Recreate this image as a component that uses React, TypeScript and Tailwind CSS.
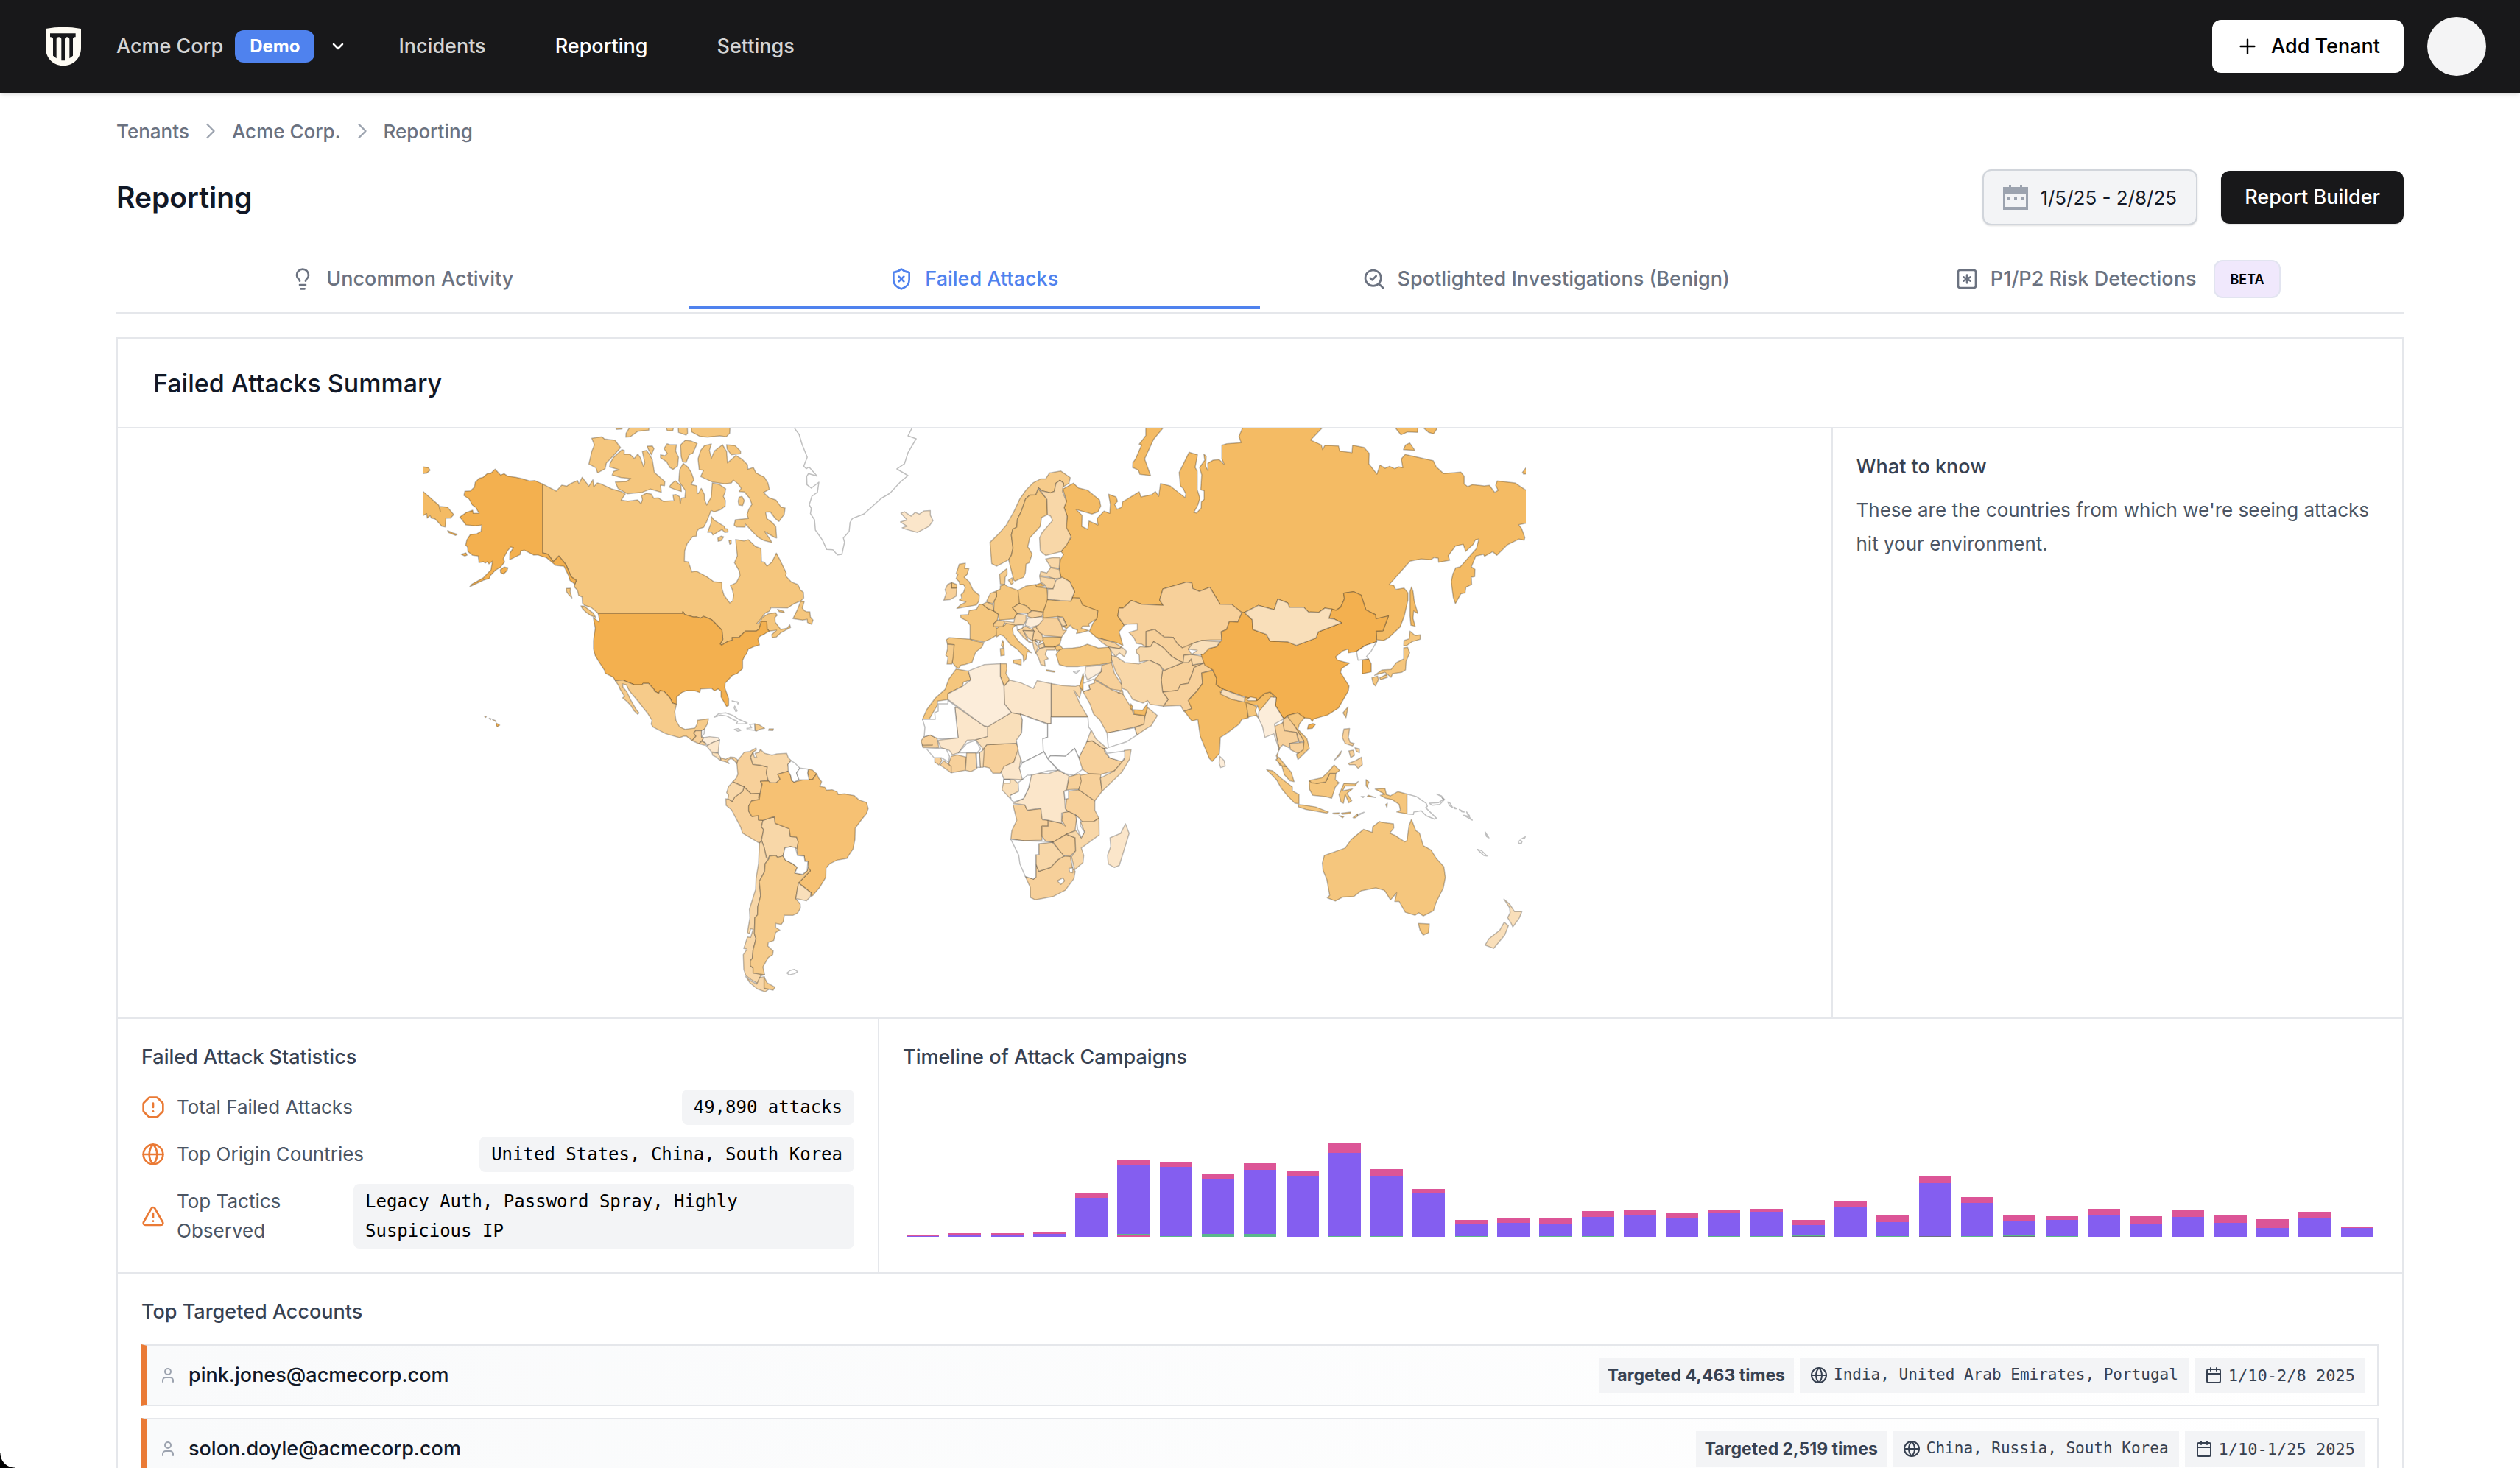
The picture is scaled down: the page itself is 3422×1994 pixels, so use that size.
import React from 'react';
import {
  Calendar,
  ChevronDown,
  ChevronRight,
  Globe,
  Lightbulb,
  OctagonAlert,
  Plus,
  SearchCheck,
  ShieldX,
  SquareAsterisk,
  TriangleAlert,
  User,
} from 'lucide-react';

const SANS = "font-['Inter','Liberation_Sans',sans-serif]";
const MONO = "font-['DejaVu_Sans_Mono','Liberation_Mono',monospace]";

// Every contour of a region is drawn on its own so that shared borders read darker.
type Region = { fill: string; d: string };
type Tile = { transform: string; regions: Region[] };

const MAX = '#f3b04f';
const HIGH = '#f4bb64';
const BRAZIL = '#f6c173';
const MID = '#f5c67d';
const MEXICO = '#f6cb8a';
const SOFT = '#f7d09a';
const PALE = '#f8d7a8';
const PALER = '#f9dfba';
const FAINT = '#fbe6ca';
const LOWEST = '#fcedda';
const NONE = '#ffffff';

const northAmerica: Tile = {
  transform: 'translate(560 570) scale(.3954 .3333)',
  regions: [
    {
      fill: NONE,
      d: 'M1313 36L1328 60L1338 100L1356 153L1344 190L1353 200L1362 193L1390 230L1360 220L1354 232L1355 265L1370 279L1396 255L1391 296L1372 312L1363 347L1370 362L1367 383L1381 408L1384 450L1408 490L1423 529L1444 530L1460 551L1475 549L1484 500L1480 482L1500 455L1503 420L1511 403L1550 385L1610 321L1640 300L1675 255L1702 228L1664 201L1690 180L1702 135L1730 78L1702 66L1715 36L1715 20L1313 20Z M1036 1213L1052 1198L1076 1195L1100 1205L1122 1222L1150 1236L1142 1240L1113 1239L1117 1230L1100 1221L1080 1208L1058 1204Z M1106 1262L1118 1259L1128 1266L1118 1270Z M1149 1258L1165 1256L1158 1242L1176 1240L1177 1266L1150 1263Z M1098 1146L1108 1149L1120 1153L1118 1159L1116 1150L1100 1149Z M1107 1167L1115 1187L1111 1190L1105 1175Z',
    },
    {
      fill: MID,
      d: 'M447 262L494 291L513 267L530 271L543 261L567 248L572 262L583 235L606 271L620 245L623 273L635 258L648 262L684 282L717 293L731 303L717 328L740 332L774 327L785 343L790 326L787 310L803 300L820 303L829 320L845 319L862 333L898 330L895 307L905 305L918 314L920 343L923 320L936 317L938 290L915 250L918 204L930 178L945 192L957 213L967 245L957 264L977 270L978 302L983 300L992 280L1003 305L1003 325L1011 348L1026 316L1030 258L1054 264L1076 282L1074 295L1068 313L1075 330L1074 352L1058 367L1037 376L1026 370L1011 415L1000 439L985 444L976 457L975 475L963 476L944 505L935 535L934 577L948 580L960 620L975 617L1011 640L1036 661L1063 664L1063 688L1070 715L1090 747L1100 738L1103 715L1098 690L1092 676L1112 665L1125 635L1123 618L1106 583L1116 555L1110 488L1139 494L1154 489L1178 517L1197 525L1199 578L1209 581L1218 597L1235 580L1250 544L1266 580L1284 625L1282 637L1302 662L1324 672L1332 693L1343 704L1344 727L1335 738L1311 750L1289 767L1232 766L1225 781L1211 789L1196 813L1183 830L1190 830L1203 805L1222 791L1247 787L1253 797L1245 806L1246 825L1265 855L1287 850L1296 836L1299 847L1266 868L1250 886L1236 888L1234 876L1251 858L1225 862L1218 853L1217 823L1199 822L1190 855L1180 862L1144 862L1122 887L1098 888L1099 899L1085 903L1062 919L1057 914L1066 895L1063 858L1040 830L1027 815L1000 802L990 809L975 804L966 805L935 794L929 782L928 790L638 790L614 765L592 757L584 748L583 723L571 716L567 695L556 682L558 670L563 655L545 640L527 590L503 556L484 579L466 549L447 543Z M579 759L590 760L621 788L630 806L612 798L597 786L584 770Z M528 688L543 687L542 701L548 727L538 715L530 702Z M1346 740L1333 742L1322 775L1307 811L1340 817L1356 814L1357 827L1371 834L1376 817L1367 805L1365 783L1352 782L1346 778L1339 768Z M1254 773L1275 781L1278 787L1260 783Z M616 76L651 70L660 79L696 84L715 114L692 145L666 177L662 200L636 217L630 196L606 181L616 130L625 103Z M720 122L728 126L727 141L747 140L762 158L774 140L783 155L794 192L798 176L790 130L804 125L815 143L824 163L831 215L867 252L866 269L852 267L855 296L817 283L790 296L738 302L706 280L697 254L734 252L750 240L717 236L686 226L691 211L710 204L677 193L679 178L690 155Z M806 108L824 107L830 118L821 143L812 125Z M875 98L884 102L907 102L904 128L914 153L911 189L895 203L884 195L873 172L852 155L852 143L868 147L875 137L864 118Z M937 84L955 86L978 97L963 137L951 143L940 175L928 172L923 150L921 103Z M903 249L922 268L924 293L905 286L882 275L890 261Z M1027 99L1020 125L1027 157L1037 128L1065 102L1079 130L1082 176L1095 163L1111 146L1131 160L1151 184L1152 202L1171 195L1180 217L1209 235L1221 258L1226 284L1206 297L1225 318L1249 328L1266 356L1280 360L1277 386L1259 415L1246 403L1229 376L1213 377L1217 403L1235 418L1248 435L1251 482L1244 480L1210 456L1227 485L1235 501L1208 493L1188 480L1170 459L1144 426L1142 438L1113 437L1105 430L1109 408L1154 403L1149 388L1155 366L1166 345L1158 320L1140 295L1122 293L1129 280L1118 261L1102 246L1096 258L1073 262L1030 254L990 232L1000 206L985 204L981 160L990 125L1003 106Z M1079 102L1108 106L1127 128L1127 139L1095 143L1081 120Z M957 20L1091 20L1090 55L1078 70L1056 66L1013 71L987 68L959 50Z M912 20L944 20L945 55L940 63L914 52Z M868 20L900 20L894 46L875 44Z M733 71L734 55L752 20L813 20L812 43L775 47L748 70Z M697 20L722 20L720 38L700 40Z M1026 394L1037 410L1071 435L1073 443L1083 446L1084 458L1073 460L1063 448L1032 470L1027 458L1014 459L1026 421Z M1049 483L1060 475L1069 478L1060 493L1050 496Z M1087 492L1095 492L1095 505L1090 508Z M1122 316L1132 313L1140 330L1134 350L1121 348L1119 332Z',
    },
    {
      fill: MAX,
      d: 'M447 262L447 543L466 549L484 579L503 556L527 590L545 640L563 655L558 670L541 655L536 635L521 598L492 594L461 563L430 551L417 552L385 532L372 535L370 550L334 571L335 543L347 522L338 519L327 534L312 567L317 580L302 602L286 613L267 637L264 647L243 655L197 681L205 670L243 645L270 612L275 577L263 588L258 579L250 585L244 579L229 583L226 556L207 553L191 538L189 518L183 512L187 490L199 468L220 466L236 455L238 430L216 433L184 429L163 397L184 379L207 369L209 382L229 382L218 358L206 348L195 324L177 309L180 292L200 290L213 275L216 255L229 239L243 235L257 220L268 220L284 202L303 226L315 220L327 230L354 235L375 240L402 250L420 248Z M302 612L315 601L328 604L325 616L313 629L303 623Z M168 549L184 543L188 552L180 556Z M121 452L138 461L154 467L148 472L124 460Z M289 1237L300 1245L291 1252L288 1244Z M275 1222L285 1226L287 1231Z M264 1217L270 1219L268 1223Z M248 1209L254 1211L250 1214Z M638 790L928 790L929 782L935 794L966 805L975 804L990 809L1000 802L1027 815L1040 830L1063 858L1066 895L1057 914L1062 919L1085 903L1099 899L1098 888L1122 887L1144 862L1180 862L1190 855L1199 822L1217 823L1218 853L1225 862L1210 873L1192 884L1187 895L1192 918L1173 925L1154 935L1147 955L1140 965L1134 982L1134 1015L1116 1034L1098 1043L1074 1074L1073 1093L1086 1136L1086 1165L1079 1169L1060 1130L1060 1107L1050 1097L1038 1105L1027 1095L990 1097L987 1112L970 1105L943 1104L925 1112L907 1132L907 1160L893 1155L885 1135L864 1107L850 1104L846 1116L832 1107L829 1098L811 1075L792 1075L789 1081L761 1080L722 1061L697 1064L690 1050L662 1033L660 1022L640 985L628 962L622 935L622 900L628 850L621 806L641 825L642 812Z',
    },
    {
      fill: HIGH,
      d: 'M20 280L38 294L91 349L96 375L93 353L121 357L142 387L131 401L115 402L113 437L101 434L88 417L77 404L65 401L61 391L51 401L49 383L38 390L20 390Z M20 193L38 193L55 196L61 206L49 218L38 220L20 220Z',
    },
    {
      fill: MEXICO,
      d: 'M697 1064L722 1061L761 1080L789 1081L792 1075L811 1075L829 1098L832 1107L846 1116L850 1104L864 1107L885 1135L893 1155L907 1160L901 1190L905 1225L918 1252L936 1262L970 1257L978 1240L979 1225L1017 1219L1013 1240L1003 1261L993 1268L973 1268L966 1277L974 1290L961 1308L941 1290L931 1290L918 1296L870 1280L827 1253L820 1241L823 1225L808 1197L790 1170L780 1155L770 1140L745 1105L735 1081L722 1077L723 1090L737 1110L750 1143L768 1180L778 1195L774 1201L760 1185L752 1168L738 1150L722 1134L729 1128L714 1100L708 1083Z M1176 1240L1192 1244L1210 1258L1194 1262L1180 1270L1177 1266Z M1225 1260L1240 1260L1238 1267L1223 1266Z',
    },
    {
      fill: SOFT,
      d: 'M973 1268L993 1268L993 1293L1001 1296L995 1308L984 1321L961 1308L974 1290L966 1277Z M984 1321L995 1310L1007 1318L1007 1328Z',
    },
    {
      fill: LOWEST,
      d: 'M1001 1296L1020 1292L1050 1296L1055 1305L1031 1316L1014 1330L1007 1318L995 1308Z',
    },
    { fill: FAINT, d: 'M1055 1305L1050 1358L1027 1354L1010 1330L1031 1316Z' },
    { fill: NONE, d: 'M993 1268L1003 1261L1002 1280L993 1293Z' },
  ],
};

const southAmerica: Tile = {
  transform: 'translate(960 960) scale(.3333)',
  regions: [
    { fill: PALER, d: 'M20 186L45 189L56 208L55 220L38 205L24 198Z' },
    {
      fill: SOFT,
      d: 'M56 208L76 214L95 205L112 206L126 218L122 232L108 216L98 210L83 220L90 232L76 224L58 220Z M126 218L152 185L175 182L200 168L201 176L188 185L178 205L187 235L216 238L246 245L242 270L250 302L218 304L225 315L217 352L215 378L210 370L213 353L180 355L151 327L105 306L118 292L126 275L122 232Z M151 327L180 355L213 353L210 370L213 378L182 384L170 405L170 425L183 447L210 443L210 461L228 463L222 490L231 500L222 545L214 556L145 515L137 490L100 420L78 402L77 375L90 378L103 385L113 368L145 345Z',
    },
    {
      fill: PALE,
      d: 'M188 185L193 205L203 207L196 190L213 185L217 173L235 190L265 197L285 192L325 190L331 207L343 220L330 235L335 262L288 275L298 295L283 310L268 313L258 310L250 302L242 270L246 245L216 238L187 235L178 205Z M105 306L151 327L145 345L113 368L103 385L85 375L88 360L80 350L88 325Z M228 463L275 447L278 475L335 497L340 529L365 531L372 550L367 578L340 570L318 575L310 608L288 614L280 606L255 608L250 617L242 615L232 570L222 545L231 500L222 490Z M214 556L222 545L232 570L242 615L252 620L237 640L235 672L213 712L219 770L207 815L206 848L195 860L193 925L200 945L188 990L185 1025L177 1035L177 1055L188 1065L188 1085L235 1092L218 1097L207 1128L180 1112L158 1095L150 1070L148 1010L163 988L150 985L165 938L178 940L188 907L178 905L173 925L165 920L175 860L173 825L198 745L200 700L210 640Z M158 1100L180 1118L203 1130L215 1103L233 1100L233 1147L253 1150L237 1162L205 1150L175 1125Z',
    },
    {
      fill: BRAZIL,
      d: 'M413 254L430 258L447 273L430 297L416 297L410 270Z M447 273L455 290L467 305L460 325L480 328L487 340L510 338L530 347L535 358L560 355L600 362L620 380L650 390L657 415L650 435L630 460L604 495L603 540L595 580L580 602L570 618L530 625L500 640L485 658L484 695L460 735L430 770L424 772L424 758L373 718L421 668L413 655L411 631L399 630L396 608L369 606L367 578L372 550L365 531L340 529L335 497L278 475L275 447L228 463L210 461L210 443L183 447L170 425L170 405L182 384L213 378L217 352L225 315L218 304L250 302L258 310L283 310L298 295L288 275L335 262L341 280L345 300L355 307L390 298L416 297L430 297Z',
    },
    {
      fill: MEXICO,
      d: 'M252 620L255 608L280 606L288 614L310 608L320 625L350 640L368 655L358 678L390 683L408 668L413 655L421 668L373 718L368 745L362 782L380 805L381 820L370 840L350 850L315 850L311 875L303 887L280 883L280 900L297 910L280 920L272 953L250 960L248 975L270 995L268 1010L250 1022L228 1060L235 1092L188 1085L188 1065L177 1055L177 1035L185 1025L188 990L200 945L193 925L195 860L206 848L207 815L219 770L213 712L235 672L237 640Z M233 1100L245 1125L277 1143L270 1155L233 1147Z',
    },
    { fill: PALER, d: 'M373 718L424 758L421 775L405 791L370 783L362 782L368 745Z' },
    {
      fill: NONE,
      d: 'M343 220L359 230L378 250L365 270L375 297L355 307L345 300L341 280L331 262L330 235Z M378 250L413 254L410 270L416 297L390 298L375 297L365 270Z M310 608L318 575L340 570L360 574L369 606L396 608L399 630L411 631L408 668L390 683L358 678L368 655L350 640L320 625Z M326 1085L338 1075L356 1070L370 1080L355 1088L335 1093Z',
    },
  ],
};

const europeAfrica: Tile = {
  transform: 'translate(1230 620) scale(.3333 .3954)',
  regions: [
    {
      fill: FAINT,
      d: 'M-20 195L-5 190L22 205L38 192L55 198L75 187L100 186L100 202L111 220L95 240L48 261L0 250L-15 245L5 240L-22 225L5 218Z',
    },
    {
      fill: MEXICO,
      d: 'M419 355L370 377L350 368L343 295L385 260L410 235L440 190L465 145L490 115L520 90L550 77L570 77L585 57L632 50L670 73L665 92L640 105L643 92L628 82L612 92L605 120L590 125L555 118L540 108L530 132L505 133L488 146L470 190L455 215L452 243L436 250L430 270L437 315L430 340Z M385 438L382 405L412 385L413 405L405 415L403 440Z M418 425L433 417L438 435L430 440Z',
    },
    {
      fill: MID,
      d: 'M419 355L430 340L437 315L430 270L436 250L452 243L455 215L470 190L488 146L505 133L530 132L540 112L575 147L577 200L553 210L548 240L505 280L497 310L515 335L503 365L490 370L487 400L480 415L445 428L440 425L425 375Z M218 370L243 367L240 385L257 385L250 405L238 415L258 430L275 460L300 477L298 497L288 510L208 522L222 510L245 500L218 493L228 487L225 475L235 467L242 450L235 440L220 440L217 430L205 420L212 405L205 403Z M187 433L208 440L208 453L186 453Z M300 508L315 508L335 523L358 530L378 542L373 562L358 575L370 590L368 615L345 627L318 637L262 628L262 580L250 565L225 555L223 545L255 543L258 530L288 525Z M395 632L400 642L397 657L389 649Z M385 660L400 658L402 683L387 685Z M165 630L178 622L262 628L275 633L318 640L310 655L285 672L277 690L270 707L240 715L225 717L215 728L205 724L190 708L185 680L197 647L170 645Z M385 445L403 440L415 447L457 460L465 490L463 505L435 520L455 540L440 558L380 562L378 542L358 530L360 495L370 480L368 463L385 455Z M457 460L490 445L530 440L535 448L575 453L580 490L560 535L510 530L490 513L463 505Z M368 592L380 585L403 580L410 572L440 573L447 580L435 590L438 610L460 635L480 650L512 675L495 670L490 695L480 705L478 685L455 663L425 645L400 618L385 612L370 620Z M437 700L470 697L470 717L440 710Z M560 620L635 620L628 645L605 655L568 655L558 635Z M612 680L630 660L680 658L710 655L740 645L785 658L828 655L838 675L838 708L790 715L740 718L700 722L655 722L625 715Z M605 655L628 648L640 660L615 668Z M205 730L255 737L265 768L235 775L230 790L172 815L172 835L130 840L128 855L95 903L68 903L85 870L120 830L160 800L175 765Z M573 733L608 738L605 741L575 737Z M577 492L630 495L672 497L680 485L708 487L720 510L782 530L778 558L745 575L748 583L720 583L715 590L745 598L715 605L695 608L700 597L680 590L670 580L655 592L640 583L655 580L640 552L620 550L560 555L560 535Z',
    },
    {
      fill: MEXICO,
      d: 'M170 645L197 647L193 690L188 713L168 713L172 690L163 683L170 662Z M330 495L345 470L368 463L370 480L355 505L335 502Z M313 508L330 500L355 510L358 530L335 523Z M435 520L463 505L490 513L512 530L497 540L475 538L455 540Z M358 575L375 562L400 565L402 572L395 585L358 585Z M385 712L410 712L412 730L408 745L423 768L400 790L385 755Z',
    },
    {
      fill: SOFT,
      d: 'M187 433L186 453L208 453L205 480L180 492L155 494L165 470L160 458L170 440Z M497 540L515 530L560 535L555 550L515 555L497 550Z M515 590L530 585L555 612L560 630L545 640L515 632L522 600Z M530 585L545 570L560 555L618 555L635 580L640 597L655 597L635 620L565 615L545 605Z M455 597L487 583L510 592L522 600L478 598L500 635L515 640L505 640L480 622Z M780 623L850 640L880 655L870 660L828 655L800 640Z M800 717L838 708L850 745L880 785L880 805L840 800L770 765L795 740Z M722 808L750 800L745 780L770 768L840 802L885 817L920 865L928 885L975 890L970 922L880 940L820 950L790 905L765 885L750 850Z M705 1035L735 980L760 977L808 1003L810 1015L830 1035L885 1048L850 1080L795 1092L745 1090L710 1068Z M315 1005L330 990L450 985L462 1005L440 1050L405 1065L385 1088L355 1088L340 1070L313 1065Z M185 1030L210 1025L247 1033L243 1078L185 1087L175 1055Z M140 1060L155 1045L185 1065L185 1087Z M118 1035L140 1030L147 1045L135 1060L118 1050Z M437 1197L485 1197L495 1215L552 1210L557 1248L580 1250L580 1270L555 1270L555 1318L480 1320L428 1315L432 1285L452 1250Z M660 1150L705 1145L770 1183L770 1215L787 1243L765 1255L720 1255L690 1230L660 1220L650 1210Z M555 1270L580 1270L580 1250L635 1260L650 1270L635 1250L640 1222L665 1220L697 1235L690 1285L655 1298L600 1325L570 1322L555 1305Z M487 1443L520 1452L530 1445L530 1400L542 1425L590 1412L620 1385L645 1373L670 1373L680 1415L690 1425L685 1450L650 1490L600 1512L527 1523L508 1515L507 1480Z M665 1100L708 1090L718 1115L705 1143L655 1145Z M710 1095L745 1090L795 1092L793 1110L800 1150L770 1183L705 1145L715 1115Z M600 1325L655 1298L690 1310L692 1355L670 1373L640 1370Z M62 977L75 963L100 957L127 968L135 1000L70 1000Z M68 988L108 988L108 992L68 993Z',
    },
    {
      fill: PALE,
      d: 'M540 108L555 118L590 125L605 120L612 92L628 82L643 92L638 120L655 155L645 175L657 205L655 245L673 275L655 305L632 327L570 340L548 325L545 280L555 262L598 220L590 205L577 200L575 147Z M570 352L600 347L628 348L625 385L590 380Z M545 410L550 395L575 400L590 382L625 388L632 418L605 420L580 413Z M545 412L605 420L612 432L600 455L575 453L565 440L550 433Z M400 565L440 570L445 550L455 540L490 545L490 565L480 578L450 580L402 572Z M478 598L522 600L515 632L500 625Z M515 632L530 630L527 640L540 655L530 675L522 660Z M618 550L640 555L655 580L638 583L630 570Z M540 648L562 640L565 655L545 660Z M530 675L545 660L568 655L610 655L605 665L575 665L568 680L580 695L565 700L568 720L550 715L540 690Z M592 780L640 787L690 790L712 785L715 805L708 830L685 803L710 850L742 895L592 895Z M985 862L1025 890L1000 925L980 935L942 957L932 932L970 920L975 890Z M890 1010L918 1007L912 1040L880 1085L800 1150L793 1105L850 1080L890 1040Z M712 1255L765 1255L787 1243L788 1300L715 1345L725 1370L722 1395L688 1420L675 1375L692 1355L690 1310L655 1298L693 1285L715 1310L728 1290Z M542 1328L597 1325L645 1373L620 1385L590 1412L542 1425L530 1400L530 1368L542 1368Z M248 1018L285 1018L290 1072L265 1083L243 1078Z M865 812L883 804L886 816Z',
    },
    {
      fill: PALER,
      d: 'M612 425L637 415L668 430L688 465L672 497L630 495L577 490L578 455L600 455Z M828 655L870 660L880 655L900 670L890 688L870 675L855 688L840 672Z M430 880L467 885L475 905L472 950L450 985L330 990L315 1005L285 973L333 962L333 928Z M735 980L745 950L757 942L775 970L820 1003L805 1003L760 977Z M400 1110L440 1110L460 1125L458 1155L430 1162L425 1175L392 1145Z M300 1018L320 1005L315 1068L303 1068Z',
    },
    {
      fill: FAINT,
      d: 'M423 768L470 778L520 797L535 770L592 780L592 918L578 918L467 885L430 880L402 850L400 790Z M210 862L318 925L333 928L333 962L285 973L250 975L215 1018L190 1025L178 1010L143 1000L130 975L213 967L200 862Z M388 1085L400 1065L440 1050L460 1000L470 1030L463 1070L480 1110L400 1108Z M512 1085L580 1090L620 1078L665 1097L655 1145L645 1150L650 1210L660 1220L635 1225L635 1260L555 1245L550 1208L495 1215L485 1197L437 1192L480 1175L500 1140Z M895 1262L910 1295L870 1405L850 1412L825 1400L822 1370L835 1340L832 1310L875 1295Z',
    },
    {
      fill: LOWEST,
      d: 'M487 575L497 555L515 555L555 550L560 560L540 580L510 587L487 580Z M255 737L320 715L385 712L385 755L400 790L402 850L430 880L335 928L318 925L172 835L172 815L230 790L265 768Z M733 722L800 717L795 740L740 768L730 745Z',
    },
    {
      fill: HIGH,
      d: 'M725 755L720 805L708 790L722 745Z M928 870L965 872L985 848L982 870L975 890L930 885Z M917 850L923 858L921 872L914 864Z M528 442L550 435L565 445L535 448Z',
    },
    {
      fill: NONE,
      d: 'M452 580L480 578L475 590L455 597Z M530 630L548 632L540 645Z M683 740L708 735L695 745Z M722 780L765 765L770 778L745 785L750 800L722 808Z M820 950L880 940L932 932L942 957L900 980L825 1000Z M172 838L210 862L200 862L213 967L143 970L127 968L100 957L75 963L78 930L68 903L120 903L118 880L132 875L132 850L172 850Z M467 885L578 920L578 965L560 970L563 1015L475 1052L462 1025L450 975L472 950L475 905Z M592 895L742 895L745 930L755 940L735 985L705 1035L688 1003L650 1030L590 1028L578 1038L560 1010L558 970L578 965L578 918L592 918Z M578 1038L590 1028L650 1030L688 1003L705 1035L720 1075L685 1095L650 1090L620 1075Z M463 1070L475 1052L563 1015L578 1038L620 1078L580 1080L512 1095L475 1110Z M808 1003L820 1020L892 1012L892 1035L880 1048L830 1035Z M645 1150L663 1148L663 1175L648 1177Z M475 1110L495 1095L512 1095L500 1140L480 1175L440 1187L430 1180L425 1165L460 1150L458 1120Z M398 1110L425 1110L425 1122L400 1122Z M288 1020L300 1018L303 1068L290 1068Z M215 1018L250 985L285 975L305 1005L290 1018L250 1018Z M85 1005L130 1003L165 1005L178 1030L175 1050L145 1035L115 1035Z M693 1233L710 1245L712 1270L728 1290L715 1310L700 1280Z M428 1315L480 1320L560 1322L600 1325L542 1330L542 1368L530 1368L530 1445L520 1452L487 1443L465 1400L460 1370Z M617 1458L640 1448L647 1458L632 1470Z M665 1415L680 1413L680 1430L668 1428Z',
    },
  ],
};

const asia: Tile = {
  transform: 'translate(1440 570) scale(.4082 .3333)',
  regions: [
    {
      fill: HIGH,
      d: 'M8 283L43 259L60 278L90 287L130 327L134 352L125 376L105 385L52 366L72 390L71 435L91 447L95 413L125 429L122 403L145 373L164 382L166 345L160 304L185 315L190 333L180 345L188 365L204 357L207 335L262 294L268 315L304 305L316 293L327 312L333 260L365 270L415 318L417 303L408 280L399 270L395 215L428 133L456 143L448 195L455 210L455 285L464 320L457 348L444 378L453 380L468 360L469 335L478 325L478 290L467 286L470 225L463 195L480 165L477 140L485 150L483 190L491 208L490 178L508 165L528 163L545 183L537 160L537 104L553 98L601 94L594 68L605 36L605 20L885 20L869 36L832 83L868 103L872 122L880 104L925 107L929 128L970 134L972 104L1010 113L1027 137L1026 180L1053 222L1063 185L1080 198L1095 190L1112 200L1125 192L1139 196L1134 160L1147 142L1240 167L1250 192L1275 220L1332 214L1343 230L1343 262L1355 273L1370 265L1410 270L1427 268L1445 297L1456 288L1448 268L1453 250L1512 258L1548 287L1570 300L1570 420L1548 422L1524 428L1534 443L1545 480L1543 491L1525 487L1487 510L1452 553L1438 538L1411 557L1407 549L1382 556L1367 600L1379 610L1378 640L1367 642L1368 672L1349 683L1346 706L1332 710L1314 750L1307 725L1300 660L1306 627L1315 604L1330 600L1384 525L1392 487L1381 489L1372 510L1348 537L1340 508L1314 515L1290 555L1295 573L1258 581L1257 565L1243 562L1231 571L1200 568L1163 577L1094 672L1109 676L1115 692L1143 686L1156 706L1156 735L1144 800L1130 845L1091 890L1075 900L1052 897L1050 862L1073 860L1091 800L1050 812L1048 795L1016 775L1000 715L975 701L942 707L945 730L932 765L917 777L880 768L860 785L825 784L810 765L762 765L756 747L723 731L711 775L658 757L612 786L604 787L570 753L531 752L497 683L462 700L440 688L437 665L420 662L341 690L330 735L342 757L270 752L236 737L208 768L195 768L191 800L212 837L205 850L195 865L208 920L185 908L120 888L96 863L108 830L122 808L124 780L73 757L62 727L38 728L47 701L31 660L2 642L-4 607L0 570L10 550L2 537L36 480L18 440L23 395L12 358L20 330Z M284 20L350 20L340 36L310 80L280 160L300 228L264 223L259 205L240 195L241 175L250 160L270 103L262 100L284 65Z M1105 20L1190 20L1188 52L1155 50L1133 62Z M1195 20L1251 20L1251 40L1241 58L1225 52Z M1141 122L1148 103L1162 95L1179 125Z M1570 180L1548 197L1537 215L1541 222L1570 220Z M1168 682L1173 700L1177 740L1189 790L1175 780L1173 810L1180 842L1166 838L1163 800L1163 700Z',
    },
    {
      fill: SOFT,
      d: 'M191 800L195 768L208 768L236 737L270 752L342 757L330 735L341 690L420 662L437 665L440 688L462 700L497 683L531 752L570 753L604 787L590 825L562 823L553 855L535 865L537 897L500 898L470 900L440 912L418 930L405 930L388 912L375 887L345 886L313 855L285 863L285 927L270 915L253 912L245 890L228 867L256 857L256 832L225 833L212 837Z M285 863L313 855L345 886L375 887L388 912L405 930L440 912L437 925L425 935L437 957L411 960L408 990L395 983L370 965L345 932L328 918L310 905L300 925L285 927Z M340 1020L345 1022L388 1000L408 990L425 990L435 975L440 1000L478 992L445 1010L440 1030L425 1075L400 1080L390 1103L340 1110L335 1060Z M445 1010L478 992L507 1020L470 1033L473 1075L455 1105L428 1140L437 1178L410 1188L400 1165L342 1168L358 1140L340 1110L390 1103L400 1080L425 1075L440 1030Z',
    },
    {
      fill: PALE,
      d: 'M253 937L265 925L285 927L300 925L310 905L328 918L345 932L370 965L395 983L408 990L388 1000L345 1022L330 1000L295 980L263 987L262 960L253 950Z M411 960L437 957L475 965L480 990L440 1000L435 975L425 990L408 990Z M165 960L185 965L215 990L262 995L295 980L330 1000L340 1020L335 1060L340 1110L358 1140L342 1168L298 1160L290 1145L275 1155L240 1140L222 1103L205 1095L200 1060L183 1025Z',
    },
    {
      fill: HIGH,
      d: 'M470 1033L507 1022L520 1055L518 1080L540 1098L532 1110L590 1145L613 1150L615 1130L655 1143L680 1115L698 1110L712 1130L690 1148L680 1190L665 1195L655 1165L620 1158L625 1215L603 1222L595 1240L552 1280L532 1295L529 1360L505 1393L495 1380L465 1290L457 1222L437 1228L412 1188L437 1178L425 1145L455 1105L473 1075Z',
    },
    {
      fill: MAX,
      d: 'M604 787L612 786L638 815L640 855L685 875L697 902L755 905L785 920L850 890L858 865L935 828L910 812L893 810L903 772L917 777L932 765L945 730L942 707L975 701L1000 715L1016 775L1048 795L1050 812L1091 800L1073 860L1050 862L1052 905L1015 920L985 945L958 950L957 935L940 942L915 967L922 980L945 988L962 992L935 1015L932 1030L960 1085L958 1105L925 1175L890 1203L842 1220L838 1230L830 1217L805 1215L790 1195L757 1205L743 1220L715 1165L718 1133L698 1110L680 1115L655 1143L615 1130L540 1098L518 1080L520 1055L507 1020L480 1000L467 955L475 940L495 932L520 925L537 897L535 865L553 855L562 823L590 825Z M825 1245L840 1238L848 1242L838 1258L822 1260Z M1005 978L1025 975L1034 995L1034 1028L1004 1036Z',
    },
    {
      fill: PALER,
      d: 'M612 786L658 757L711 775L723 731L756 747L762 765L810 765L825 784L860 785L880 768L903 772L893 810L910 812L935 828L858 865L850 890L785 920L755 905L697 902L685 875L640 855L638 815Z M440 912L470 900L530 905L520 925L495 932L475 957L437 957L455 940L425 935Z M540 1098L613 1133L612 1151L570 1140L532 1118Z',
    },
    {
      fill: MID,
      d: 'M617 1152L655 1170L648 1185L658 1215L650 1205L625 1212Z M957 1170L950 1215L940 1195Z M1142 930L1155 928L1162 950L1150 985L1148 1020L1135 1030L1105 1035L1100 1050L1080 1030L1045 1042L1070 1020L1100 1018L1118 990L1142 975Z M1036 1052L1055 1045L1058 1060L1048 1085L1040 1075Z M1062 1052L1085 1038L1088 1050L1065 1060Z M1163 862L1180 880L1197 877L1197 895L1170 905L1150 922L1142 920L1143 900L1160 893Z M757 1205L790 1195L812 1215L795 1240L790 1262L820 1300L828 1340L790 1385L785 1365L805 1345L810 1310L780 1250L755 1220Z',
    },
    {
      fill: SOFT,
      d: 'M743 1220L755 1210L780 1250L810 1310L795 1315L785 1275L745 1268L738 1240Z M712 1250L740 1235L745 1268L785 1275L792 1312L762 1320L762 1338L740 1325L725 1345L722 1380L738 1405L730 1410L718 1370L728 1345L720 1300Z M762 1320L810 1315L808 1345L790 1360L765 1345Z',
    },
    {
      fill: LOWEST,
      d: 'M530 1372L545 1390L548 1412L533 1418L528 1400Z M658 1215L660 1190L680 1160L700 1130L718 1133L715 1165L743 1220L712 1240L720 1300L728 1345L715 1300L710 1280L680 1295L672 1250Z M620 1140L632 1130L652 1135L652 1145L625 1145Z',
    },
    {
      fill: NONE,
      d: 'M985 945L1015 920L1052 905L1033 945L1018 965L1025 975L1005 978L990 980Z',
    },
  ],
};

const oceania: Tile = {
  transform: 'translate(1640 780) scale(.3333 .3381)',
  regions: [
    {
      fill: MID,
      d: 'M240 785L265 790L300 820L345 855L345 870L372 885L372 922L355 920L325 890L300 860L280 825Z M302 770L320 772L340 795L352 833L335 830L312 805Z M278 745L290 735L320 772L302 770Z M413 830L445 840L480 835L497 800L522 800L520 825L535 838L520 855L505 900L480 893L428 888L415 865Z M415 828L422 838L445 840L480 835L497 800L522 800L538 788L515 766L490 795L465 818Z M368 925L395 928L440 935L492 955L485 960L400 945L370 935Z M510 960L535 958L535 963L513 963Z M545 960L583 955L580 961L550 964Z M535 970L555 973L550 978Z M592 978L610 963L612 971L600 979Z M555 840L600 842L613 833L600 850L560 850L550 870L590 862L568 880L587 910L575 918L560 885L553 920L543 915L535 885Z M645 825L657 835L650 850L655 862L645 850Z M650 892L683 897L655 888Z M625 893L637 893L633 897Z M682 863L722 860L728 885L745 890L775 873L812 883L812 963L770 955L785 948L780 925L750 905L725 900L703 888L722 884Z M725 925L732 920L730 937Z M700 993L710 997L757 1003L758 1020L742 1040L765 1050L803 1075L812 1070L820 1010L830 985L848 1030L863 1040L878 1090L910 1108L930 1140L962 1175L968 1218L960 1260L930 1320L920 1352L878 1373L860 1360L845 1370L805 1358L780 1315L762 1315L770 1280L745 1308L720 1270L685 1260L625 1272L595 1295L550 1297L520 1313L487 1300L497 1290L485 1225L470 1190L467 1160L475 1130L560 1100L585 1065L635 1025L670 1037L672 1015Z M858 1403L903 1405L900 1440L878 1450L865 1430Z',
    },
    {
      fill: SOFT,
      d: 'M555 622L578 620L573 655L580 675L597 680L590 690L560 680L548 655Z M575 710L593 707L598 727L583 737Z M600 697L618 702L618 717L606 712Z M573 760L600 750L627 735L630 765L613 780L600 765L577 765Z M515 748L545 710L540 725Z',
    },
    {
      fill: PALER,
      d: 'M1207 1305L1230 1325L1250 1355L1280 1355L1270 1380L1243 1417L1235 1400L1222 1380L1232 1360L1230 1340Z M1208 1398L1225 1412L1210 1450L1165 1503L1130 1490L1145 1465L1190 1430Z',
    },
    {
      fill: NONE,
      d: 'M612 965L637 956L612 970Z M812 883L850 893L890 920L895 932L888 938L932 980L925 984L890 970L870 950L840 955L838 965L812 963Z M903 920L940 918L960 905L955 895L965 905L945 925L915 928Z M933 883L953 891L961 906L950 892Z M978 915L988 920L998 938L986 930Z M1003 935L1015 942L1008 942Z M1025 945L1045 955L1035 954Z M1043 968L1063 973L1078 988L1060 978Z M1055 955L1068 972L1060 966Z M1130 1035L1138 1047L1146 1059L1136 1054Z M1098 1105L1115 1110L1138 1132L1125 1130Z M1265 1075L1273 1068L1281 1073L1278 1081L1268 1081Z M1280 1062L1294 1055L1290 1062Z',
    },
  ],
};

const tiles: Tile[] = [asia, northAmerica, southAmerica, europeAfrica, oceania];

const WorldMap: React.FC = () => (
  <svg
    viewBox="575 582 1497 800"
    className="w-full max-w-[1497px]"
    role="img"
    aria-label="Failed attacks by country"
  >
    {tiles.map((tile) => (
      <g key={tile.transform} transform={tile.transform}>
        {tile.regions.map((region, r) =>
          region.d.split(/(?=M)/).map((contour, c) => (
            <path
              key={`${r}-${c}`}
              d={contour}
              fill={region.fill}
              stroke="#000"
              strokeOpacity={0.25}
              strokeWidth={1.5}
              strokeLinejoin="round"
              vectorEffect="non-scaling-stroke"
            />
          ))
        )}
      </g>
    ))}
  </svg>
);

const Logo: React.FC = () => (
  <svg viewBox="0 0 144 158" className="h-[54px] w-12" aria-hidden="true">
    <path d="M0 7Q72 -7 144 7V85C144 128 112 158 72 158S0 128 0 85Z" fill="#fefbf3" />
    <path
      d="M18 26H122V41H119Q111 41 111 49V117L97 128V51Q97 41 87 41Q78 41 78 51V137H64V51Q64 41 54 41Q44 41 44 51V128L30 117V49Q30 41 20 41H18Z"
      fill="#18181a"
    />
  </svg>
);

const DateIcon: React.FC = () => (
  <svg viewBox="0 0 34 34" className="h-[34px] w-[34px]" fill="#9ca3af" aria-hidden="true">
    <path d="M8 0h3v3h12V0h3v3h8v31H0V3h8zM3 13v17h28V13z" fillRule="evenodd" />
    <path d="M6 17h4v4H6zM15 17h4v4h-4zM24 17h4v4h-4z" />
  </svg>
);

// Heights in pixels; pink sits on top, the other segments at the foot of the bar.
type Bar = { total: number; pink: number; green?: number; gray?: number; rose?: number };

const bars: Bar[] = [
  { total: 3, pink: 2 },
  { total: 5, pink: 3 },
  { total: 5, pink: 2 },
  { total: 6, pink: 2 },
  { total: 59, pink: 6 },
  { total: 104, pink: 6, rose: 3, green: 1 },
  { total: 101, pink: 6, green: 1 },
  { total: 86, pink: 8, green: 4 },
  { total: 100, pink: 9, green: 4 },
  { total: 90, pink: 8 },
  { total: 128, pink: 14, green: 1 },
  { total: 92, pink: 9, green: 1 },
  { total: 65, pink: 6 },
  { total: 23, pink: 5, green: 1 },
  { total: 26, pink: 7 },
  { total: 25, pink: 8, green: 1 },
  { total: 35, pink: 8, green: 1 },
  { total: 36, pink: 6 },
  { total: 32, pink: 6 },
  { total: 37, pink: 5, green: 1 },
  { total: 38, pink: 4, green: 1 },
  { total: 23, pink: 7, green: 1, gray: 1 },
  { total: 48, pink: 7 },
  { total: 29, pink: 9, green: 1 },
  { total: 82, pink: 9, gray: 1 },
  { total: 54, pink: 8, green: 1 },
  { total: 29, pink: 7, green: 1, gray: 1 },
  { total: 28, pink: 5, green: 1 },
  { total: 38, pink: 9 },
  { total: 28, pink: 10 },
  { total: 37, pink: 10 },
  { total: 29, pink: 10 },
  { total: 24, pink: 12 },
  { total: 34, pink: 8 },
  { total: 13, pink: 1 },
];

const Timeline: React.FC = () => (
  <div
    className="mt-auto mb-12 flex items-end justify-between pr-[7px] pl-[5px]"
    role="img"
    aria-label="Attack campaigns per day"
  >
    {bars.map((bar, i) => (
      <div key={i} className="flex w-11 flex-col bg-[#845ef0]" style={{ height: bar.total }}>
        <div className="bg-[#dc5597]" style={{ height: bar.pink }} />
        <div className="mt-auto bg-[#5ab88a]" style={{ height: bar.green ?? 0 }} />
        <div className="bg-[#6b7280]" style={{ height: bar.gray ?? 0 }} />
        <div className="bg-[#dc5597]" style={{ height: bar.rose ?? 0 }} />
      </div>
    ))}
  </div>
);

const navLinks = [
  { label: 'Incidents', active: false },
  { label: 'Reporting', active: true },
  { label: 'Settings', active: false },
];

const Header: React.FC = () => (
  <header className="flex h-[126px] items-center bg-[#18181a] pr-[46px] pl-[62px] text-[27px] font-medium shadow-md">
    <a href="#" aria-label="Home">
      <Logo />
    </a>
    <button type="button" className="ml-12 flex items-center text-[#d4d4d4]">
      Acme Corp
      <span className="ml-4 flex h-11 items-center rounded-xl bg-[#4f82ee] px-5 text-[24px] font-bold text-white">
        Demo
      </span>
      <ChevronDown className="ml-5 h-6 w-6 text-white" strokeWidth={2.5} />
    </button>
    <nav className="ml-[70px] flex gap-[94px]">
      {navLinks.map((link) => (
        <a key={link.label} href="#" className={link.active ? 'text-white' : 'text-[#d4d4d4]'}>
          {link.label}
        </a>
      ))}
    </nav>
    <button
      type="button"
      className="ml-auto flex h-[72px] items-center gap-4 rounded-xl bg-white px-8 text-[27px] text-black"
    >
      <Plus className="h-8 w-8" strokeWidth={1.8} />
      Add Tenant
    </button>
    <button type="button" aria-label="Account" className="ml-8 h-20 w-20 rounded-full bg-[#f4f4f5]" />
  </header>
);

const crumbs = ['Tenants', 'Acme Corp.', 'Reporting'];

const tabs = [
  { label: 'Uncommon Activity', icon: Lightbulb, active: false, beta: false },
  { label: 'Failed Attacks', icon: ShieldX, active: true, beta: false },
  { label: 'Spotlighted Investigations (Benign)', icon: SearchCheck, active: false, beta: false },
  { label: 'P1/P2 Risk Detections', icon: SquareAsterisk, active: false, beta: true },
];

const Tabs: React.FC = () => (
  <div role="tablist" className="mt-8 grid grid-cols-4 border-b-2 border-[#e5e7eb] pb-1">
    {tabs.map(({ label, icon: Icon, active, beta }) => (
      <button
        key={label}
        type="button"
        role="tab"
        aria-selected={active}
        className={`flex h-[82px] items-center justify-center gap-4 border-b-4 pt-1 text-[27px] font-medium ${
          active ? 'border-[#4f82ee] text-[#4f82ee]' : 'border-transparent text-[#6b7280]'
        }`}
      >
        <Icon className="h-8 w-8" strokeWidth={2} />
        {label}
        {beta && (
          <span className="ml-2 flex h-[52px] items-center rounded-xl border-2 border-[#e2e4f0] bg-[#f0e8fc] px-5 text-[18px] font-semibold text-black">
            BETA
          </span>
        )}
      </button>
    ))}
  </div>
);

const stats = [
  { label: 'Total Failed Attacks', value: '49,890 attacks', icon: OctagonAlert, wrap: false },
  { label: 'Top Origin Countries', value: 'United States, China, South Korea', icon: Globe, wrap: false },
  {
    label: 'Top Tactics Observed',
    value: 'Legacy Auth, Password Spray, Highly Suspicious IP',
    icon: TriangleAlert,
    wrap: true,
  },
];

const Statistics: React.FC = () => (
  <section className="border-r-2 border-[#e5e7eb] p-8">
    <h3 className="text-[27px] leading-10 font-medium text-[#374151]">Failed Attack Statistics</h3>
    <dl className="mt-6 flex flex-col gap-4">
      {stats.map(({ label, value, icon: Icon, wrap }) => (
        <div key={label} className="flex items-center justify-between">
          <dt className="flex items-center gap-4 text-[26px] leading-10 text-[#4b5563]">
            <Icon className="h-8 w-8 shrink-0 text-[#ea7a35]" strokeWidth={2} />
            <span className={wrap ? 'w-40' : ''}>{label}</span>
          </dt>
          <dd
            className={`rounded-lg bg-[#f3f4f6] px-4 py-1 text-[24px] leading-10 text-black ${MONO} ${
              wrap ? 'w-[680px] shrink-0 pr-32' : ''
            }`}
          >
            {value}
          </dd>
        </div>
      ))}
    </dl>
  </section>
);

const accounts = [
  {
    email: 'pink.jones@acmecorp.com',
    times: 'Targeted 4,463 times',
    countries: 'India, United Arab Emirates, Portugal',
    dates: '1/10-2/8 2025',
  },
  {
    email: 'solon.doyle@acmecorp.com',
    times: 'Targeted 2,519 times',
    countries: 'China, Russia, South Korea',
    dates: '1/10-1/25 2025',
  },
];

const Accounts: React.FC = () => (
  <section className="border-t-2 border-[#e5e7eb] p-8">
    <h3 className="text-[27px] leading-10 font-medium text-[#374151]">Top Targeted Accounts</h3>
    <ul className="mt-6 flex flex-col gap-4">
      {accounts.map((account) => (
        <li
          key={account.email}
          className="flex h-[84px] items-center border-2 border-l-8 border-[#e5e7eb] border-l-[#ea7a35] bg-linear-to-r from-[#f9fafb] to-white pr-4 pl-4"
        >
          <User className="h-6 w-6 text-[#9ca3af]" strokeWidth={2} />
          <span className="ml-4 text-[27px] font-medium text-[#111827]">{account.email}</span>
          <div className={`ml-auto flex gap-2 text-[21px] text-[#374151] ${MONO}`}>
            <span className={`flex h-12 items-center bg-[#f3f4f6] px-3 text-[23px] font-bold ${SANS}`}>
              {account.times}
            </span>
            <span className="flex h-12 items-center gap-2 bg-[#f3f4f6] px-[14px]">
              <Globe className="h-6 w-6" strokeWidth={2} />
              {account.countries}
            </span>
            <span className="flex h-12 items-center gap-2 bg-[#f3f4f6] px-[14px] text-[22px]">
              <Calendar className="h-6 w-6" strokeWidth={2} />
              {account.dates}
            </span>
          </div>
        </li>
      ))}
    </ul>
  </section>
);

const App: React.FC = () => {
  return (
    <div className={`relative h-screen overflow-hidden bg-white ${SANS}`}>
      <Header />
      <main className="px-[158px] pt-8">
        <nav aria-label="Breadcrumb" className="flex h-10 items-center text-[26px] font-medium text-[#6b7280]">
          {crumbs.map((crumb, i) => (
            <React.Fragment key={crumb}>
              {i > 0 && <ChevronRight className="mx-[11px] h-9 w-9 text-[#9ca3af]" strokeWidth={1.6} />}
              <a href="#">{crumb}</a>
            </React.Fragment>
          ))}
        </nav>

        <div className="mt-8 flex items-center">
          <h1 className="text-[39px] font-semibold text-[#111827]">Reporting</h1>
          <button
            type="button"
            className="ml-auto flex h-[76px] items-center gap-4 rounded-xl border-2 border-[#d1d5db] bg-[#f3f4f6] px-[26px] text-[26px] text-[#111827] shadow-sm"
          >
            <DateIcon />
            1/5/25 - 2/8/25
          </button>
          <button
            type="button"
            className="ml-8 h-[72px] rounded-xl bg-[#18181a] px-8 text-[27px] font-medium text-white shadow-sm"
          >
            Report Builder
          </button>
        </div>

        <Tabs />

        <div className="mt-8 border-2 border-[#e5e7eb]">
          <h2 className="flex h-[120px] items-center px-12 text-[34px] font-medium text-[#111827]">
            Failed Attacks Summary
          </h2>
          <div className="grid grid-cols-[3fr_1fr] border-t-2 border-[#e5e7eb]">
            <div className="flex justify-center">
              <WorldMap />
            </div>
            <section className="border-l-2 border-[#e5e7eb] p-8">
              <h3 className="text-[27px] leading-10 font-medium text-[#374151]">What to know</h3>
              <p className="mt-4 text-[26px] leading-[46px] text-[#4b5563]">
                These are the countries from which we're seeing attacks hit your environment.
              </p>
            </section>
          </div>
          <div className="grid grid-cols-[1fr_2fr] border-t-2 border-[#e5e7eb]">
            <Statistics />
            <section className="flex flex-col px-8 pt-8">
              <h3 className="text-[27px] leading-10 font-medium text-[#374151]">Timeline of Attack Campaigns</h3>
              <Timeline />
            </section>
          </div>
          <Accounts />
        </div>
      </main>
      <div className="absolute bottom-0 left-0 h-5 w-5 bg-[radial-gradient(circle_at_100%_0,transparent_19px,#000_20px)]" />
    </div>
  );
};

export default App;
